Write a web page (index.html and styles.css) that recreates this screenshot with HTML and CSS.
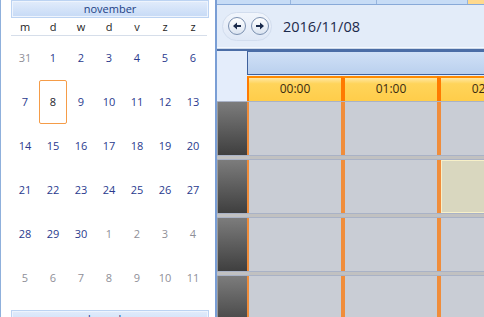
FILE: index.html
```html
<!DOCTYPE html>
<html>
<head>
    <title>Scheduler</title>
    <link rel="stylesheet" href="styles.css">
</head>
<body>
    <div class="app">
        <div class="sidebar">
            <div class="month-head">november</div>
            <div class="weekdays">
                <span>m</span><span>d</span><span>w</span><span>d</span><span>v</span><span>z</span><span>z</span>
            </div>
            <div class="days">
                <span class="other">31</span><span>1</span><span>2</span><span>3</span><span>4</span><span>5</span><span>6</span>
                <span>7</span><span class="sel">8</span><span>9</span><span>10</span><span>11</span><span>12</span><span>13</span>
                <span>14</span><span>15</span><span>16</span><span>17</span><span>18</span><span>19</span><span>20</span>
                <span>21</span><span>22</span><span>23</span><span>24</span><span>25</span><span>26</span><span>27</span>
                <span>28</span><span>29</span><span>30</span><span class="other">1</span><span class="other">2</span><span class="other">3</span><span class="other">4</span>
                <span class="other">5</span><span class="other">6</span><span class="other">7</span><span class="other">8</span><span class="other">9</span><span class="other">10</span><span class="other">11</span>
            </div>
            <div class="month-head next">december</div>
        </div>

        <div class="main">
            <div class="tabs">
                <div class="tab t1"></div>
                <div class="tab t2"></div>
                <div class="tab t3"></div>
                <div class="tab today"></div>
            </div>

            <div class="toolbar">
                <div class="nav-pill">
                    <button class="nav-btn" title="Vorige">
                        <svg width="16" height="16" viewBox="0 0 16 16"><path d="M4 8 L8 4.5 V7 H12 V9 H8 V11.5 Z" fill="#1b2b4c"/></svg>
                    </button>
                    <button class="nav-btn" title="Volgende">
                        <svg width="16" height="16" viewBox="0 0 16 16"><path d="M12 8 L8 4.5 V7 H4 V9 H8 V11.5 Z" fill="#1b2b4c"/></svg>
                    </button>
                </div>
                <div class="date-label">2016/11/08</div>
            </div>
            <div class="toolbar-edge"></div>

            <div class="sched">
                <div class="head-row">
                    <div class="corner"></div>
                    <div class="band"></div>
                </div>
                <div class="time-row">
                    <div class="corner"></div>
                    <div class="time first">00:00</div>
                    <div class="time">01:00</div>
                    <div class="time">02:00</div>
                </div>

                <div class="rows">
                    <div class="row">
                        <div class="rowhead"></div>
                        <div class="cell first"></div>
                        <div class="cell"></div>
                        <div class="cell"></div>
                    </div>
                    <div class="row">
                        <div class="rowhead"></div>
                        <div class="cell first"></div>
                        <div class="cell"></div>
                        <div class="cell busy"></div>
                    </div>
                    <div class="row">
                        <div class="rowhead"></div>
                        <div class="cell first"></div>
                        <div class="cell"></div>
                        <div class="cell"></div>
                    </div>
                    <div class="row">
                        <div class="rowhead"></div>
                        <div class="cell first"></div>
                        <div class="cell"></div>
                        <div class="cell"></div>
                    </div>
                </div>
            </div>
        </div>
    </div>
</body>
</html>
```

FILE: styles.css
```css
body {
    margin: 0;
    font-family: "Open Sans", "Noto Sans", sans-serif;
    background-color: #ffffff;
    width: 484px;
    height: 317px;
    overflow: hidden;
}

.app {
    display: flex;
    height: 317px;
}

/* date navigator */

.sidebar {
    width: 215px;
    flex-shrink: 0;
    box-sizing: border-box;
    border-left: 1px solid #8fb0dc;
    padding: 0 6px 0 10px;
    background-color: #ffffff;
}

.month-head {
    width: 198px;
    height: 18px;
    box-sizing: border-box;
    border: 1px solid #bcd3f2;
    box-shadow: inset 0 0 0 1px #eef4fd;
    background: linear-gradient(#e2ecfb, #c6daf6);
    text-align: center;
    font-size: 11px;
    line-height: 16px;
    color: #213f86;
}

.month-head.next {
    margin-top: 10px;
}

.weekdays {
    display: grid;
    grid-template-columns: repeat(7, 28px);
    width: 196px;
    height: 17px;
    border-bottom: 1px solid #d6deea;
    font-size: 11px;
    line-height: 17px;
    color: #1e1e1e;
    text-align: center;
}

.days {
    display: grid;
    grid-template-columns: repeat(7, 28px);
    grid-auto-rows: 44px;
    width: 196px;
    font-size: 11px;
    color: #2a3a8e;
    text-align: center;
}

.days span {
    line-height: 44px;
}

.days .other {
    color: #8f8f98;
}

.days .sel {
    border: 1px solid #f59c48;
    border-radius: 2px;
    line-height: 42px;
    color: #1c1c2a;
}

/* scheduler */

.main {
    flex: 1;
    display: flex;
    flex-direction: column;
    border-left: 2px solid #7a9ed5;
    background-color: #e4edfb;
    overflow: hidden;
}

.tabs {
    display: flex;
    flex-shrink: 0;
    height: 4px;
    border-bottom: 1px solid #88a9d8;
}

.tab {
    background-color: #c7dcf6;
    border-right: 1px solid #97b5de;
}

.tab.t1 { width: 73px; }
.tab.t2 { width: 85px; }
.tab.t3 { width: 90px; }

.tab.today {
    flex: 1;
    border-right: none;
    background-color: #ffd98e;
}

.toolbar {
    display: flex;
    flex-shrink: 0;
    align-items: center;
    height: 42px;
    padding-left: 5px;
    background-color: #e3ecf9;
}

.nav-pill {
    display: flex;
    align-items: center;
    gap: 5px;
    height: 29px;
    box-sizing: border-box;
    padding: 0 2px 0 5px;
    border: 1px solid #d2ddee;
    border-radius: 15px;
    background: linear-gradient(#f1f5fc, #dfe8f6);
}

.nav-btn {
    display: flex;
    align-items: center;
    justify-content: center;
    width: 18px;
    height: 18px;
    padding: 0;
    border: 1px solid #7b90b0;
    border-radius: 50%;
    background: linear-gradient(#ffffff, #dbe4f1);
}

.date-label {
    margin-left: 11px;
    font-size: 14.5px;
    color: #1c2a4c;
}

.toolbar-edge {
    flex-shrink: 0;
    height: 4px;
    background: linear-gradient(#f4f8fe 0, #f4f8fe 1px, #cdd9ea 1px, #cdd9ea 2px, #4b6da6 2px);
}

.sched {
    flex: 1;
    min-height: 0;
    display: flex;
    flex-direction: column;
}

.corner {
    width: 30px;
    flex-shrink: 0;
    background-color: #e4edfb;
}

.head-row {
    display: flex;
    flex-shrink: 0;
    height: 25px;
}

.band {
    flex: 1;
    height: 24px;
    box-sizing: border-box;
    border-left: 1px solid #3f619c;
    border-bottom: 1px solid #3f619c;
    border-top: 1px solid #4b6da6;
    background: linear-gradient(#d0e0f6, #bad0ee);
}

.time-row {
    display: flex;
    flex-shrink: 0;
    height: 25px;
}

.time {
    width: 92px;
    flex-shrink: 0;
    border-left: 4px solid #ff7a00;
    border-top: 2px solid #ff8a00;
    background: linear-gradient(#ffe7a2, #ffd45a 25%, #ffcd4a);
    font-size: 12px;
    line-height: 22px;
    color: #3a2c12;
    text-align: center;
}

.time.first {
    border-left-width: 2px;
}

.rows {
    flex: 1;
    min-height: 0;
    background-color: #c1c1c1;
}

.row {
    display: flex;
    flex-shrink: 0;
    height: 53px;
    border-top: 1px solid #a9b2c6;
    border-bottom: 1px solid #a9b2c6;
    margin-bottom: 3px;
}

.rowhead {
    width: 30px;
    flex-shrink: 0;
    background: linear-gradient(#7c7c7c, #3f3f3f);
    box-shadow: inset 1px 0 0 #9a9a9a;
}

.cell {
    width: 92px;
    flex-shrink: 0;
    border-left: 4px solid #f08d3b;
    background-color: #c9cdd5;
}

.cell.first {
    border-left-width: 2px;
}

.cell.busy {
    background-color: #d9d7bf;
    box-shadow: inset 0 0 0 1px #f7f0c8;
}
```
